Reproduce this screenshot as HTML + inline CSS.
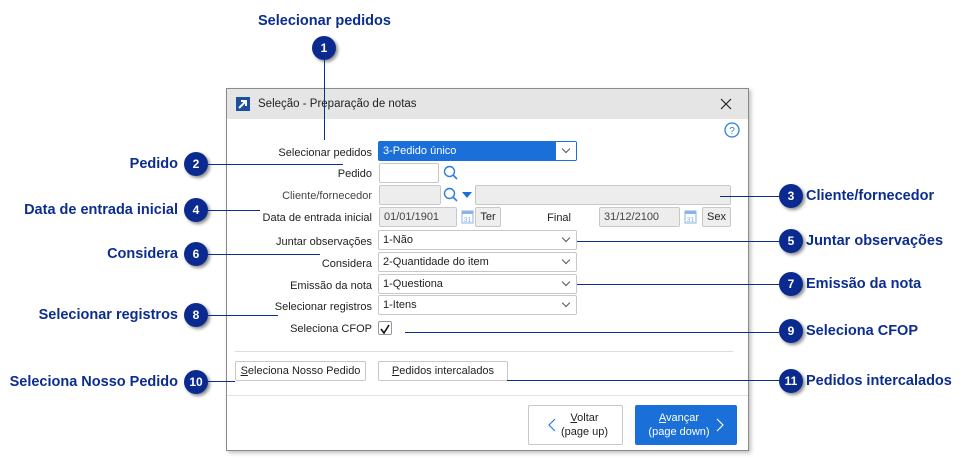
<!DOCTYPE html>
<html><head><meta charset="utf-8"><style>
*{margin:0;padding:0;box-sizing:border-box}
body{width:969px;height:466px;background:#fff;position:relative;font-family:"Liberation Sans",sans-serif;overflow:hidden}
.a{position:absolute}
.b{position:absolute;width:24px;height:24px;border-radius:50%;background:#0b2a8f;color:#fff;font-weight:bold;font-size:12px;text-align:center;line-height:24px;box-shadow:2px 2px 3px rgba(0,0,0,.45)}
.t{position:absolute;color:#0c2d8f;font-weight:bold;font-size:14.5px;white-space:nowrap;line-height:18px}
.h{position:absolute;height:1px;background:#0c2d8f}
.l{position:absolute;font-size:11px;color:#222;text-align:right;white-space:nowrap;line-height:14px}
.i{position:absolute;height:20px;border:1px solid #c8c8c8;border-radius:2px;background:#fff;font-size:11px;line-height:18px;padding-left:4px;color:#222;white-space:nowrap}
.g{background:#ededed;color:#444}
.s::after{content:"";position:absolute;right:7px;top:4px;width:5px;height:5px;border-right:1px solid #555;border-bottom:1px solid #555;transform:rotate(45deg)}
.btn{position:absolute;border:1px solid #c8c8c8;border-radius:2px;background:#fff;font-size:11px;text-align:center;color:#222;white-space:nowrap}
</style></head><body>
<div class="t" style="left:258px;top:12px">Selecionar pedidos</div>
<div class="b" style="left:312px;top:36px">1</div>
<div class="a" style="left:324px;top:60px;width:1px;height:80px;background:#0c2d8f;z-index:5"></div>

<div class="a" style="left:226px;top:88px;width:523px;height:363px;border:1px solid #8a8a8a;background:#fff;box-shadow:2px 2px 4px rgba(0,0,0,.25)">
 <div class="a" style="left:0;top:0;width:521px;height:30px;background:#e5e5e5"></div>
 <div class="a" style="left:9px;top:8px;width:14px;height:14px;background:#1c4f9c"><svg width="14" height="14"><path d="M3 11L10 4M5 4h5v5" stroke="#fff" stroke-width="2" fill="none"/></svg></div>
 <div class="a" style="left:31px;top:9px;font-size:11.5px;color:#222">Seleção - Preparação de notas</div>
 <svg class="a" style="left:493px;top:9px" width="12" height="12"><path d="M1 1L11 11M11 1L1 11" stroke="#222" stroke-width="1.2"/></svg>
 <svg class="a" style="left:497px;top:33px" width="16" height="16"><circle cx="8" cy="8" r="7" stroke="#2a7de1" stroke-width="1.3" fill="none"/><text x="8" y="12" font-size="10" text-anchor="middle" fill="#2a7de1" font-family="Liberation Sans">?</text></svg>
 <div class="a" style="left:8px;top:262px;width:498px;height:1px;background:#ddd"></div>
 <div class="a" style="left:0;top:306px;width:521px;height:1px;background:#e2e2e2"></div>
</div>

<div class="l" style="right:597px;top:146px">Selecionar pedidos</div>
<div class="i s" style="left:378px;top:141px;width:199px;background:#1a6fd8;color:#fff;border-color:#1a6fd8">3-Pedido único<span class="a" style="right:0;top:0;width:20px;height:18px;background:#fff"></span></div>
<div class="l" style="right:597px;top:167px">Pedido</div>
<div class="i" style="left:379px;top:163px;width:60px"></div>
<svg class="a" style="left:443px;top:165px" width="16" height="16"><circle cx="6.5" cy="6.5" r="5" stroke="#2a7de1" stroke-width="1.4" fill="none"/><path d="M10 10L14 14" stroke="#2a7de1" stroke-width="1.6"/></svg>
<div class="l" style="right:597px;top:189px;color:#444">Cliente/fornecedor</div>
<div class="i g" style="left:379px;top:185px;width:62px"></div>
<svg class="a" style="left:443px;top:187px" width="16" height="16"><circle cx="6.5" cy="6.5" r="5" stroke="#2a7de1" stroke-width="1.4" fill="none"/><path d="M10 10L14 14" stroke="#2a7de1" stroke-width="1.6"/></svg>
<svg class="a" style="left:462px;top:192px" width="10" height="7"><path d="M0 0H10L5 6Z" fill="#1a6fd8"/></svg>
<div class="i g" style="left:475px;top:185px;width:256px"></div>
<div class="l" style="right:597px;top:211px">Data de entrada inicial</div>
<div class="i g" style="left:379px;top:207px;width:78px">01/01/1901</div>
<svg class="a" style="left:461px;top:208px" width="13" height="16"><rect x="1" y="3" width="11" height="12" fill="#fff" stroke="#8ab4e8"/><rect x="1" y="3" width="11" height="3" fill="#8ab4e8"/><text x="6.5" y="14" font-size="7" text-anchor="middle" fill="#8ab4e8" font-family="Liberation Sans">31</text></svg>
<div class="btn g" style="left:475px;top:207px;width:26px;height:20px;line-height:18px;background:#eee">Ter</div>
<div class="l" style="right:398px;top:211px">Final</div>
<div class="i g" style="left:599px;top:207px;width:81px">31/12/2100</div>
<svg class="a" style="left:684px;top:208px" width="13" height="16"><rect x="1" y="3" width="11" height="12" fill="#fff" stroke="#8ab4e8"/><rect x="1" y="3" width="11" height="3" fill="#8ab4e8"/><text x="6.5" y="14" font-size="7" text-anchor="middle" fill="#8ab4e8" font-family="Liberation Sans">31</text></svg>
<div class="btn g" style="left:702px;top:207px;width:29px;height:20px;line-height:18px;background:#eee">Sex</div>

<div class="l" style="right:597px;top:235px">Juntar observações</div>
<div class="i s" style="left:378px;top:230px;width:199px">1-Não</div>
<div class="l" style="right:597px;top:257px">Considera</div>
<div class="i s" style="left:378px;top:252px;width:199px">2-Quantidade do item</div>
<div class="l" style="right:597px;top:279px">Emissão da nota</div>
<div class="i s" style="left:378px;top:274px;width:199px">1-Questiona</div>
<div class="l" style="right:597px;top:300px">Selecionar registros</div>
<div class="i s" style="left:378px;top:295px;width:199px">1-Itens</div>
<div class="l" style="right:597px;top:322px">Seleciona CFOP</div>
<div class="a" style="left:378px;top:321px;width:14px;height:14px;border:1px solid #999;border-radius:2px"><svg width="12" height="12"><path d="M2 6L5 10L10 2" stroke="#111" stroke-width="1.6" fill="none"/></svg></div>

<div class="btn" style="left:235px;top:361px;width:131px;height:20px;line-height:18px"><u>S</u>eleciona Nosso Pedido</div>
<div class="btn" style="left:378px;top:361px;width:130px;height:20px;line-height:18px"><u>P</u>edidos intercalados</div>

<div class="btn" style="left:528px;top:405px;width:95px;height:40px;line-height:14px;padding-top:5px;padding-left:18px"><u>V</u>oltar<br>(page up)</div>
<svg class="a" style="left:548px;top:418px" width="8" height="14"><path d="M7 1L1 7L7 13" stroke="#2a7de1" stroke-width="1.2" fill="none"/></svg>
<div class="btn" style="left:635px;top:405px;width:102px;height:40px;line-height:14px;padding-top:5px;padding-right:14px;background:#1a6fd8;border-color:#1a6fd8;color:#fff"><u>A</u>vançar<br>(page down)</div>
<svg class="a" style="left:716px;top:418px" width="8" height="14"><path d="M1 1L7 7L1 13" stroke="#fff" stroke-width="1.2" fill="none"/></svg>

<div class="t" style="right:791px;top:155px">Pedido</div><div class="b" style="left:184px;top:152px">2</div><div class="h" style="left:208px;top:164px;width:135px"></div>
<div class="t" style="left:806px;top:187px">Cliente/fornecedor</div><div class="b" style="left:779px;top:184px">3</div><div class="h" style="left:720px;top:196px;width:59px"></div>
<div class="t" style="right:791px;top:201px">Data de entrada inicial</div><div class="b" style="left:184px;top:198px">4</div><div class="h" style="left:208px;top:210px;width:52px"></div>
<div class="t" style="left:806px;top:232px">Juntar observações</div><div class="b" style="left:779px;top:229px">5</div><div class="h" style="left:577px;top:241px;width:202px"></div>
<div class="t" style="right:791px;top:245px">Considera</div><div class="b" style="left:184px;top:242px">6</div><div class="h" style="left:208px;top:254px;width:112px"></div>
<div class="t" style="left:806px;top:275px">Emissão da nota</div><div class="b" style="left:779px;top:272px">7</div><div class="h" style="left:577px;top:284px;width:202px"></div>
<div class="t" style="right:791px;top:306px">Selecionar registros</div><div class="b" style="left:184px;top:303px">8</div><div class="h" style="left:208px;top:315px;width:70px"></div>
<div class="t" style="left:806px;top:322px">Seleciona CFOP</div><div class="b" style="left:779px;top:319px">9</div><div class="h" style="left:405px;top:332px;width:374px"></div>
<div class="t" style="right:791px;top:373px">Seleciona Nosso Pedido</div><div class="b" style="left:184px;top:370px">10</div><div class="h" style="left:208px;top:381px;width:27px"></div>
<div class="t" style="left:806px;top:372px">Pedidos intercalados</div><div class="b" style="left:779px;top:369px">11</div><div class="h" style="left:507px;top:380px;width:272px"></div>
</body></html>
